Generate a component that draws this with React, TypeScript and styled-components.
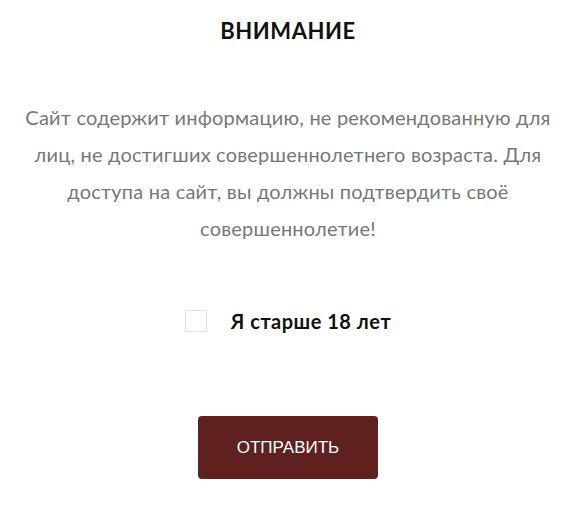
import React, { useState } from "react";
import styled, { createGlobalStyle } from "styled-components";

const GlobalStyle = createGlobalStyle`
  html, body {
    margin: 0;
    padding: 0;
    background: #ffffff;
  }
  body {
    font-family: "Lato", "Noto Sans", sans-serif;
  }
`;

const Page = styled.main`
  width: 580px;
  min-height: 508px;
  box-sizing: border-box;
  padding: 18px 22px 0 18px;
  display: flex;
  flex-direction: column;
  align-items: center;
`;

const Title = styled.h1`
  margin: 0;
  font-family: "Lato", "Noto Sans", sans-serif;
  font-weight: 700;
  font-size: 22px;
  line-height: 26px;
  letter-spacing: 0.6px;
  color: #111111;
  text-transform: uppercase;
`;

const Message = styled.p`
  margin: 55px 0 0;
  width: 536px;
  font-family: "Lato", "Noto Sans", sans-serif;
  font-size: 20px;
  line-height: 37px;
  letter-spacing: 0.2px;
  color: #777777;
  text-align: center;
`;

const CheckRow = styled.label`
  margin-top: 62px;
  display: flex;
  align-items: center;
  gap: 24px;
  cursor: pointer;
`;

const Box = styled.span<{ $checked: boolean }>`
  width: 20px;
  height: 20px;
  border: 1px solid #e3e3e3;
  background: ${(p) => (p.$checked ? "#5e1f1f" : "#ffffff")};
  flex: none;
`;

const HiddenInput = styled.input`
  display: none;
`;

const CheckText = styled.span`
  font-family: "Lato", "Noto Sans", sans-serif;
  font-weight: 700;
  font-size: 20px;
  letter-spacing: 0.5px;
  color: #111111;
`;

const SubmitButton = styled.button`
  margin-top: 83px;
  width: 180px;
  height: 63px;
  border: none;
  border-radius: 4px;
  background: #5f2020;
  color: #ffffff;
  font-family: "Liberation Sans", Arial, sans-serif;
  font-size: 17px;
  letter-spacing: 0;
  cursor: pointer;
`;

export default function App() {
  const [checked, setChecked] = useState(false);
  return (
    <>
      <GlobalStyle />
      <Page>
        <Title>Внимание</Title>
        <Message>
          Сайт содержит информацию, не рекомендованную для лиц, не достигших
          совершеннолетнего возраста. Для доступа на сайт, вы должны
          подтвердить своё совершеннолетие!
        </Message>
        <CheckRow>
          <HiddenInput
            type="checkbox"
            checked={checked}
            onChange={(e) => setChecked(e.target.checked)}
          />
          <Box $checked={checked} />
          <CheckText>Я старше 18 лет</CheckText>
        </CheckRow>
        <SubmitButton type="button">ОТПРАВИТЬ</SubmitButton>
      </Page>
    </>
  );
}
